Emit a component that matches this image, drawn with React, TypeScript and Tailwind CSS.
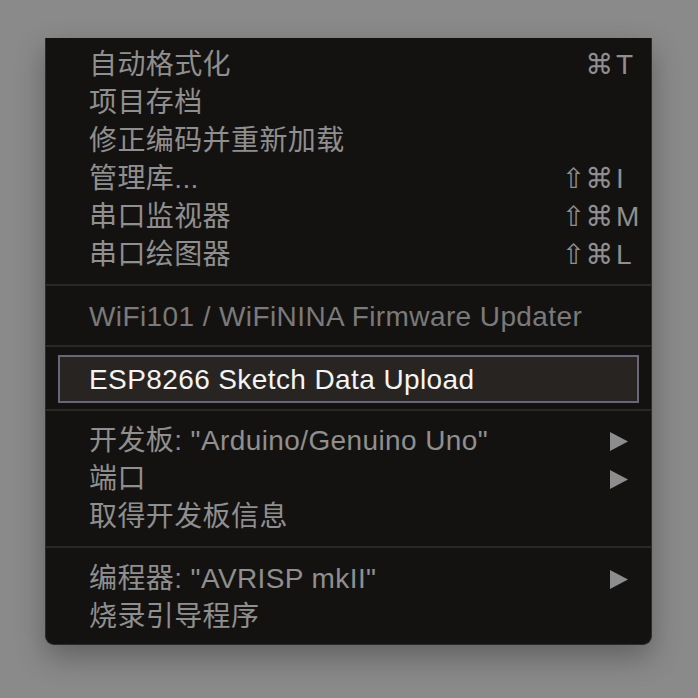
const font = { fontFamily: '"Liberation Sans", "Noto Sans CJK SC", sans-serif' };

type Item = {
  label: string;
  mods?: string;
  keyChar?: string;
  submenu?: boolean;
  dim?: boolean;
};

function Arrow() {
  return (
    <svg width="18" height="19" viewBox="0 0 18 19" className="mr-[23px]">
      <polygon points="0,0 18,9.5 0,19" fill="#8d8d8d" />
    </svg>
  );
}

function Row({ item }: { item: Item }) {
  return (
    <div className="flex h-[38px] items-center pl-[43px] pt-[2px]">
      <span className={item.dim ? "flex-1 text-[#7a7a7a]" : "flex-1 text-[#8f8f8f]"}>{item.label}</span>
      {item.keyChar && (
        <span className="flex items-center text-[#8f8f8f]">
          <span className="w-[60px] text-right" style={{ fontFamily: '"DejaVu Sans", sans-serif' }}>
            {item.mods}
          </span>
          <span className="ml-[2px] w-[35px]">{item.keyChar}</span>
        </span>
      )}
      {item.submenu && <Arrow />}
    </div>
  );
}

function Separator({ h, top }: { h: string; top: string }) {
  return (
    <div className={`${h} ${top}`}>
      <div className="h-[2px] bg-[#2a2827]" />
    </div>
  );
}

const group1: Item[] = [
  { label: "自动格式化", mods: "⌘", keyChar: "T" },
  { label: "项目存档" },
  { label: "修正编码并重新加载" },
  { label: "管理库...", mods: "⇧⌘", keyChar: "I" },
  { label: "串口监视器", mods: "⇧⌘", keyChar: "M" },
  { label: "串口绘图器", mods: "⇧⌘", keyChar: "L" },
];

const group3: Item[] = [
  { label: '开发板: "Arduino/Genuino Uno"', submenu: true },
  { label: "端口", submenu: true },
  { label: "取得开发板信息" },
];

const group4: Item[] = [
  { label: '编程器: "AVRISP mkII"', submenu: true },
  { label: "烧录引导程序" },
];

export default function App() {
  return (
    <div className="h-[698px] w-[698px] overflow-hidden bg-[#8a8a8a] pt-[38px] pl-[45px]" style={font}>
      <div className="w-[607px] rounded-b-[9px] border-x border-b border-[#2e2c2b] bg-[#141211] pt-[7px] pb-[9px] text-[28px] leading-[38px] tracking-[0.4px] shadow-[0_12px_30px_rgba(0,0,0,0.3)]">
        {group1.map((it) => (
          <Row key={it.label} item={it} />
        ))}
        <Separator h="h-[24px]" top="pt-[11px]" />
        <Row item={{ label: "WiFi101 / WiFiNINA Firmware Updater", dim: true }} />
        <Separator h="h-[20px]" top="pt-[10px]" />
        <div className="mx-[12px] flex h-[48px] items-center border-2 border-[#676779] bg-[#282422] pl-[29px] pt-[2px] text-[#f4f4f4]">
          ESP8266 Sketch Data Upload
        </div>
        <Separator h="h-[18px]" top="pt-[6px]" />
        {group3.map((it) => (
          <Row key={it.label} item={it} />
        ))}
        <Separator h="h-[24px]" top="pt-[11px]" />
        {group4.map((it) => (
          <Row key={it.label} item={it} />
        ))}
      </div>
    </div>
  );
}
